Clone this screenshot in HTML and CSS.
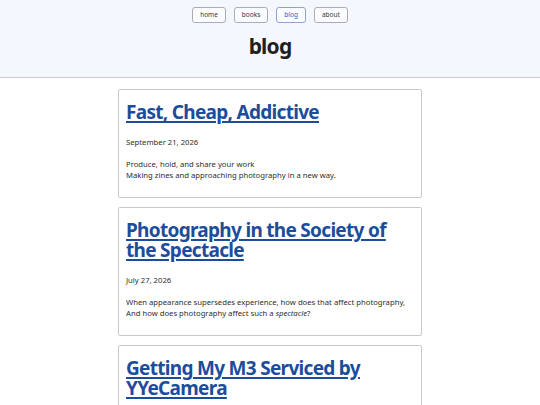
FILE: index.html
```html
<!doctype html>
<html lang="en">
  <head>
    <meta charset="UTF-8" />
    <meta name="viewport" content="width=device-width, initial-scale=1.0" />
    <title>blog</title>
    <link rel="stylesheet" href="styles.css">
  </head>
  <body>
    <header class="site-header">
      <nav class="nav">
        <a class="nav-link" href="#">home</a>
        <a class="nav-link" href="#">books</a>
        <a class="nav-link active" href="#">blog</a>
        <a class="nav-link" href="#">about</a>
      </nav>
      <h1 class="page-title">blog</h1>
    </header>

    <main class="posts">
      <article class="post">
        <h2 class="post-title"><a href="#">Fast, Cheap, Addictive</a></h2>
        <p class="post-date">September 21, 2026</p>
        <p class="post-summary">Produce, hold, and share your work<br>Making zines and approaching photography in a new way.</p>
      </article>

      <article class="post">
        <h2 class="post-title"><a href="#">Photography in the Society of the Spectacle</a></h2>
        <p class="post-date">July 27, 2026</p>
        <p class="post-summary">When appearance supersedes experience, how does that affect photography,<br>And how does photography affect such a <em>spectacle</em>?</p>
      </article>

      <article class="post">
        <h2 class="post-title"><a href="#">Getting My M3 Serviced by YYeCamera</a></h2>
        <p class="post-date">June 2, 2026</p>
        <p class="post-summary">Notes from sending an old rangefinder off for a clean, lube and adjust.</p>
      </article>
    </main>
  </body>
</html>
```

FILE: styles.css
```css
:root {
  --header-bg: #f4f7fe; --rule: #c9cbd1; --card-border: #c8c9cd;
  --link: #1b4d9c; --text: #2e2e2e; --btn-border: #a9adb8;
}
html, body { margin: 0; padding: 0; background: #fff; color: var(--text); font-family: "Noto Sans", sans-serif; }

/* header: nav pills + page heading */
.site-header { background: var(--header-bg); border-bottom: 1px solid var(--rule); padding: 7px 0 18px; }
.nav { display: flex; justify-content: center; gap: 8px; }
.nav-link { display: block; font-size: 6.5px; line-height: 14px; padding: 0 7px; border: 1px solid var(--btn-border); border-radius: 3px; color: #3a3a3a; text-decoration: none; background: #fbfcff; }
.nav-link.active { color: #3562b0; border-color: #8fa3cc; }
.page-title { margin: 10px 0 0; text-align: center; font-size: 21px; line-height: 26px; font-weight: 700; letter-spacing: -0.8px; color: #1f1f1f; }

/* post cards */
.posts { width: 304px; margin: 11px auto 0; display: flex; flex-direction: column; gap: 9px; }
.post { border: 1px solid var(--card-border); border-radius: 2px; padding: 12px 7px 16px; }
.post-title { margin: 0; font-size: 19px; line-height: 20px; font-weight: 700; letter-spacing: -0.7px; }
.post-title a { color: var(--link); text-decoration-thickness: 1.5px; text-underline-offset: 2px; }
.post-date { margin: 15px 0 0; font-size: 7.7px; line-height: 11px; }
.post-summary { margin: 11px 0 0; font-size: 7.7px; line-height: 11px; }
```
